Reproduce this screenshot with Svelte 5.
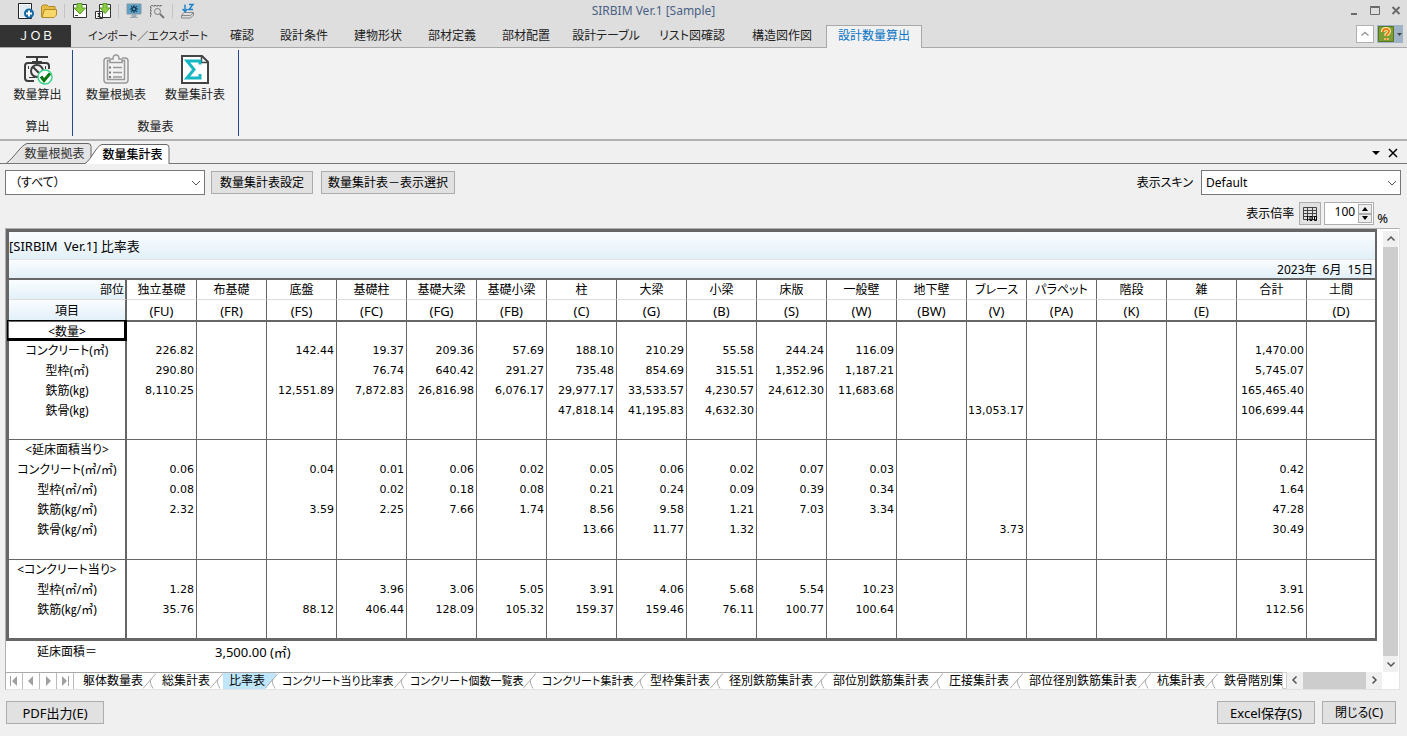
<script lang="ts">
	// Quantity summary window: ribbon, document tabs, filter bar and the ratio sheet.

	type Section = { title: string; rows: { label: string; values: string[] }[] };

	const ribbonTabs = [
		{ label: 'インポート／エクスポート', width: 132 },
		{ label: '確認', width: 56 },
		{ label: '設計条件', width: 68 },
		{ label: '建物形状', width: 80 },
		{ label: '部材定義', width: 68 },
		{ label: '部材配置', width: 80 },
		{ label: '設計テーブル', width: 80 },
		{ label: 'リスト図確認', width: 92 },
		{ label: '構造図作図', width: 88 },
		{ label: '設計数量算出', width: 96 }
	];
	let activeRibbon = $state('設計数量算出');

	const columns = [
		['独立基礎', '(FU)', 70],
		['布基礎', '(FR)', 70],
		['底盤', '(FS)', 70],
		['基礎柱', '(FC)', 70],
		['基礎大梁', '(FG)', 70],
		['基礎小梁', '(FB)', 70],
		['柱', '(C)', 70],
		['大梁', '(G)', 70],
		['小梁', '(B)', 70],
		['床版', '(S)', 70],
		['一般壁', '(W)', 70],
		['地下壁', '(BW)', 70],
		['ブレース', '(V)', 60],
		['パラペット', '(PA)', 70],
		['階段', '(K)', 70],
		['雑', '(E)', 70],
		['合計', '', 70],
		['土間', '(D)', 68]
	] as const;

	/** Spread a compact "a|b||c" line over the 18 part columns. */
	const line = (text: string) => text.split('|');

	const sections: Section[] = [
		{
			title: '<数量>',
			rows: [
				{ label: 'コンクリート(㎥)', values: line('226.82||142.44|19.37|209.36|57.69|188.10|210.29|55.58|244.24|116.09||||||1,470.00|') },
				{ label: '型枠(㎡)', values: line('290.80|||76.74|640.42|291.27|735.48|854.69|315.51|1,352.96|1,187.21||||||5,745.07|') },
				{ label: '鉄筋(㎏)', values: line('8,110.25||12,551.89|7,872.83|26,816.98|6,076.17|29,977.17|33,533.57|4,230.57|24,612.30|11,683.68||||||165,465.40|') },
				{ label: '鉄骨(㎏)', values: line('||||||47,818.14|41,195.83|4,632.30||||13,053.17||||106,699.44|') }
			]
		},
		{
			title: '<延床面積当り>',
			rows: [
				{ label: 'コンクリート(㎥/㎡)', values: line('0.06||0.04|0.01|0.06|0.02|0.05|0.06|0.02|0.07|0.03||||||0.42|') },
				{ label: '型枠(㎡/㎡)', values: line('0.08|||0.02|0.18|0.08|0.21|0.24|0.09|0.39|0.34||||||1.64|') },
				{ label: '鉄筋(㎏/㎡)', values: line('2.32||3.59|2.25|7.66|1.74|8.56|9.58|1.21|7.03|3.34||||||47.28|') },
				{ label: '鉄骨(㎏/㎡)', values: line('||||||13.66|11.77|1.32||||3.73||||30.49|') }
			]
		},
		{
			title: '<コンクリート当り>',
			rows: [
				{ label: '型枠(㎡/㎥)', values: line('1.28|||3.96|3.06|5.05|3.91|4.06|5.68|5.54|10.23||||||3.91|') },
				{ label: '鉄筋(㎏/㎥)', values: line('35.76||88.12|406.44|128.09|105.32|159.37|159.46|76.11|100.77|100.64||||||112.56|') }
			]
		}
	];

	const sheets = [
		{ label: '躯体数量表', width: 79 },
		{ label: '総集計表', width: 67 },
		{ label: '比率表', width: 53 },
		{ label: 'コンクリート当り比率表', width: 128 },
		{ label: 'コンクリート個数一覧表', width: 132 },
		{ label: 'コンクリート集計表', width: 108 },
		{ label: '型枠集計表', width: 79 },
		{ label: '径別鉄筋集計表', width: 104 },
		{ label: '部位別鉄筋集計表', width: 116 },
		{ label: '圧接集計表', width: 80 },
		{ label: '部位径別鉄筋集計表', width: 128 },
		{ label: '杭集計表', width: 67 },
		{ label: '鉄骨階別集計表', width: 104 }
	];
	let activeSheet = $state('比率表');
	let zoom = $state(100);
</script>

{#snippet chevron(d: string)}
	<svg class="chevron" viewBox="0 0 10 10" width="10" height="10" aria-hidden="true"><path {d} /></svg>
{/snippet}

<div class="window">
	<header class="titlebar">
		<div class="quick">
			<button aria-label="新規">
				<svg viewBox="0 0 16 16" width="16" height="16">
					<path d="M.5.5h13v15H.5z" fill="#fff" stroke="#222" />
					<path d="M2 2h10v12H2z" fill="#dfeaf3" />
					<circle cx="11" cy="10.500" r="5" fill="#146aa5" />
					<path d="M11 7.500v6M8 10.500h6" stroke="#fff" stroke-width="2" />
				</svg>
			</button>
			<button aria-label="開く">
				<svg viewBox="0 0 16 16" width="16" height="16">
					<path d="M.5 14V3.500L2 2h4l1.500 1.500H14V8" fill="#e8bd42" stroke="#b28a25" />
					<path d="M1 14.500 3.500 6.500h12V12L13 14.500z" fill="#f9d86b" stroke="#b28a25" />
				</svg>
			</button>
			<i></i>
			<button aria-label="保存">
				<svg viewBox="0 0 16 16" width="16" height="16">
					<path d="M1.500 1.500h13v13h-13z" fill="#fff" stroke="#333" />
					<path d="M5 .5h5V5h3.500L8 11 2 5h3z" fill="#8ccc3f" stroke="#5a9e2c" />
					<path d="M3 12.500h3" stroke="#444" />
				</svg>
			</button>
			<button aria-label="別名で保存">
				<svg viewBox="0 0 16 16" width="16" height="16">
					<path d="M4.500 1.500h11v13h-11zM.500 8.500h7v7h-7z" fill="#fff" stroke="#333" />
					<path d="M8 .5h4V5h3L10 10.500 5 5h3z" fill="#8ccc3f" stroke="#5a9e2c" />
					<path d="M2.500 10.500h3M4 10.500v3M2.500 13.500h3" stroke="#222" />
				</svg>
			</button>
			<i></i>
			<button aria-label="表示設定">
				<svg viewBox="0 0 16 16" width="16" height="16">
					<path d="M1 1h14v10H1z" fill="#5aa2c8" stroke="#8498a4" />
					<path d="M6 11.500h4v2H6zM4 14.500h8" fill="#a9b5bc" stroke="#9cabb5" />
					<circle cx="8" cy="6" r="2" fill="#4e9ac4" stroke="#1b3a50" stroke-width="1.500" />
					<path d="M8 2v1.500M8 8.500V10M4 6h1.500M10.500 6H12M5 3l1 1M10 8l1 1M11 3l-1 1M5 9l1-1" stroke="#1b3a50" />
				</svg>
			</button>
			<button aria-label="検索">
				<svg viewBox="0 0 16 16" width="16" height="16" fill="none" stroke="#777">
					<path d="M1.500 14V2.500H13M1 5h3M1 8h2M1 11h3M5 2v3M8 2v2M11 2v3" stroke-dasharray="2 1" />
					<circle cx="8.500" cy="8.500" r="3" />
					<path d="m11 11 4 4" stroke-width="2" />
				</svg>
			</button>
			<i></i>
			<button aria-label="並べ替え">
				<svg viewBox="0 0 16 16" width="16" height="16" fill="none">
					<path d="M1.500 12.500 4 9.500h9.500l-3 3zM1.500 12.500v2.500h9l3-3V9.500" fill="#ddd" stroke="#888" />
					<path d="M5 1.500v7M2.500 6 5 8.500 7.500 6M9 1.500h4l-4 5h4" stroke="#1680cb" stroke-width="1.400" />
				</svg>
			</button>
		</div>
		<h1>SIRBIM Ver.1 [Sample]</h1>
		<div class="system">
			<button aria-label="最小化"><svg viewBox="0 0 10 10" width="10" height="10"><path d="M2 8h6" stroke-width="2" /></svg></button>
			<button aria-label="最大化"><svg viewBox="0 0 10 10" width="10" height="10"><path d="M.500 1.500h9v7h-9zM0 .5h10" /></svg></button>
			<button aria-label="終了"><svg viewBox="0 0 10 10" width="10" height="10"><path d="m1.500 1 7 7M8.500 1l-7 7" stroke-width="2" /></svg></button>
		</div>
	</header>

	<nav class="ribbon-tabs">
		<button class="job">ＪＯＢ</button>
		{#each ribbonTabs as tab, i (tab.label)}
			<button
				class="ribbon-tab"
				class:active={activeRibbon === tab.label}
				class:kana={i === 0}
				style:width="{tab.width}px"
				onclick={() => (activeRibbon = tab.label)}>{tab.label}</button
			>
		{/each}
		<div class="ribbon-help">
			<button class="collapse" aria-label="リボンを折りたたむ">{@render chevron('M1.500 6.500 5 3.500l3.500 3')}</button>
			<button class="help" aria-label="ヘルプ">
				<svg viewBox="0 0 26 18" width="26" height="18">
					<path d="M0 0h26v18H0z" fill="#9fb2c6" />
					<path d="M1.500 1.500h15v15h-15z" fill="#7d9e32" stroke="#587520" />
					<path d="M6 7Q6 4 9 4t3 2.500Q12 8 9.500 9.500V11M9.500 13v2" fill="none" stroke="#fff2b0" stroke-width="4" />
					<path d="M6 7Q6 4 9 4t3 2.500Q12 8 9.500 9.500V11M9.500 13v2" fill="none" stroke="#f07b12" stroke-width="2" />
					<path d="M20 8h5l-2.500 3z" fill="#444" />
				</svg>
			</button>
		</div>
	</nav>

	<section class="ribbon">
		<div class="group single">
			<div class="tools">
				<button class="tool">
					<svg viewBox="0 0 32 32" width="32" height="32" fill="none" stroke="#3c3c3c">
						<path d="M5 3h22M16 3v5M11 8h10" stroke-width="2" />
						<path d="M13 27H7q-3 0-3-3V12q0-3 3-3h18q3 0 3 3v3" stroke-width="2" />
						<path d="M7.500 12v3M24.500 12v3M8 23.500h6" />
						<circle cx="16" cy="17" r="6" stroke-width="2" />
						<path d="m12 13 6 6" stroke-width="2" />
						<circle cx="24" cy="23" r="7" fill="#fff" stroke="#3cd28b" stroke-width="1.500" />
						<path d="m20 22.500 3 4 6-7" stroke="#087511" stroke-width="3" />
					</svg>
					数量算出
				</button>
			</div>
			<span>算出</span>
		</div>
		<div class="group">
			<div class="tools">
				<button class="tool">
					<svg viewBox="0 0 32 32" width="32" height="32" fill="none" stroke="#999" stroke-width="1.500">
						<path d="M10 4H7q-3 0-3 3v19q0 3 3 3h18q3 0 3-3V7q0-3-3-3h-3" />
						<path d="M10 6.500H7.500v19h17v-19H22" />
						<path d="M10 8.500V6q0-1 1-1h2q0-4 3-4t3 4h2q1 0 1 1v2.500z" fill="#f2f2f2" />
						<path d="M13 13.500h9M13 18.500h9M13 23h9" />
						<path d="M9 13.500h2M9 18.500h2M9 23h2" stroke="#777" stroke-width="2" />
					</svg>
					数量根拠表
				</button>
				<button class="tool">
					<svg viewBox="0 0 32 32" width="32" height="32" fill="none">
						<path d="M3 2h20l6 6v21H3z" fill="#fff" stroke="#444" stroke-width="2" />
						<path d="M22.500 2.500v6h6" stroke="#444" stroke-width="1.500" />
						<path d="M21 10.500V7H8l7 8.500L8 24h13v-4" stroke="#16b6c3" stroke-width="3" />
					</svg>
					数量集計表
				</button>
			</div>
			<span>数量表</span>
		</div>
	</section>

	<div class="doc-tabs">
		<button class="doc-tab">
			<svg viewBox="0 0 86 20" width="86" height="20"><path d="M.500 20C8 15 15 2 21 .500h61q3 0 3 3V20" /></svg>
			<span>数量根拠表</span>
		</button>
		<button class="doc-tab current">
			<svg viewBox="0 0 86 20" width="86" height="20"><path d="M.500 20C8 15 12 2 18 .500h64q3 0 3 3V20" /></svg>
			<span>数量集計表</span>
		</button>
		<div class="doc-actions">
			<button aria-label="タブ一覧"><svg viewBox="0 0 10 10" width="10" height="10"><path d="M1 3h8L5 7z" fill="#000" /></svg></button>
			<button aria-label="タブを閉じる"><svg viewBox="0 0 10 10" width="10" height="10"><path d="m1 1 8 8M9 1 1 9" stroke="#000" stroke-width="1.500" /></svg></button>
		</div>
	</div>

	<main>
		<div class="filters">
			<div class="combo">
				<select class="indent" aria-label="表示対象"><option>（すべて）</option></select>
				{@render chevron('m1 3 4 4 4-4')}
			</div>
			<button class="push settings">数量集計表設定</button>
			<button class="push">数量集計表－表示選択</button>
			<label class="skin" for="skin">表示スキン</label>
			<div class="combo">
				<select id="skin"><option>Default</option></select>
				{@render chevron('m1 3 4 4 4-4')}
			</div>
		</div>

		<div class="zoom">
			<label for="zoom">表示倍率</label>
			<button class="grid-button" aria-label="100%表示">
				<svg viewBox="0 0 16 16" width="16" height="16" fill="none" stroke="#444">
					<path d="M1.500 1.500h13v12h-13zM1 4.500h14M1 7.500h14M1 10.500h14M5.500 1v13M10.500 1v13" />
					<path d="M5.500 10v5M8 10.500h2v4H8zM12.500 10.500h2v4h-2z" stroke="#000" />
				</svg>
			</button>
			<div class="spinner">
				<input id="zoom" type="text" inputmode="numeric" bind:value={zoom} />
				<div>
					<button aria-label="拡大" onclick={() => (zoom += 1)}><svg viewBox="0 0 6 4" width="6" height="4"><path d="M0 4h6L3 0z" /></svg></button>
					<button aria-label="縮小" onclick={() => (zoom -= 1)}><svg viewBox="0 0 6 4" width="6" height="4"><path d="M0 0h6L3 4z" /></svg></button>
				</div>
			</div>
			<span class="percent">%</span>
		</div>

		<div class="sheet">
			<div class="view">
				<div class="page">
					<table>
						<colgroup>
							<col style:width="118px" />
							{#each columns as [name, , width] (name)}
								<col style:width="{width}px" />
							{/each}
						</colgroup>
						<thead>
							<tr class="caption"><th colspan="19">[SIRBIM&ensp;Ver.1] 比率表</th></tr>
							<tr class="date"><th colspan="19">2023年&ensp;6月&ensp;15日</th></tr>
							<tr class="names">
								<th class="corner part">部位</th>
								{#each columns as [name] (name)}
									<th>{name}</th>
								{/each}
							</tr>
							<tr class="codes">
								<th class="corner">項目</th>
								{#each columns as [name, code] (name)}
									<th class="latin">{code}</th>
								{/each}
							</tr>
						</thead>
						{#each sections as section, i (section.title)}
							<tbody>
								<tr>
									<th class:selected={i === 0}>{section.title}</th>
									{#each columns as [name] (name)}<td></td>{/each}
								</tr>
								{#each section.rows as row (row.label)}
									<tr>
										<th>{row.label}</th>
										{#each row.values as value, c (c)}
											<td>{value}</td>
										{/each}
									</tr>
								{/each}
								<tr class="blank">
									<th></th>
									{#each columns as [name] (name)}<td></td>{/each}
								</tr>
							</tbody>
						{/each}
					</table>
					<p class="area"><span>延床面積＝</span><span class="latin">3,500.00 (㎡)</span></p>
				</div>
				<div class="vbar">
					<button aria-label="上へ">{@render chevron('m1.500 6.500 3.500-3.500 3.500 3.500')}</button>
					<div class="thumb"></div>
					<button aria-label="下へ">{@render chevron('m1.500 3.500 3.500 3.500 3.500-3.500')}</button>
				</div>
			</div>

			<div class="sheet-bar">
				<div class="steps">
					<button aria-label="先頭"><svg viewBox="0 0 10 10" width="10" height="10"><path d="M1 0h1v10H1zM8 0v10L3 5z" /></svg></button>
					<button aria-label="前へ"><svg viewBox="0 0 10 10" width="10" height="10"><path d="M7 0v10L2 5z" /></svg></button>
					<button aria-label="次へ"><svg viewBox="0 0 10 10" width="10" height="10"><path d="M3 0v10l5-5z" /></svg></button>
					<button aria-label="末尾"><svg viewBox="0 0 10 10" width="10" height="10"><path d="M8 0h1v10H8zM2 0v10l5-5z" /></svg></button>
				</div>
				<div class="sheet-tabs">
					{#each sheets as sheet (sheet.label)}
						<button
							class:active={activeSheet === sheet.label}
							class:kana={sheet.label.startsWith('コン')}
							style:width="{sheet.width}px"
							onclick={() => (activeSheet = sheet.label)}
						>
							<span>{sheet.label}</span>
							<svg viewBox="0 0 13 16" width="13" height="16">
								<path class="cover" d="M0 16 13 0v16z" />
								<path d="M0 15.500 13 .500M8 6q-2 3 2 9.500" />
							</svg>
						</button>
					{/each}
				</div>
				<div class="grip"></div>
				<div class="hbar">
					<button aria-label="左へ">{@render chevron('M6.500 1.500 3 5l3.500 3.500')}</button>
					<div class="thumb"></div>
					<button aria-label="右へ">{@render chevron('M3.500 1.500 7 5 3.500 8.500')}</button>
				</div>
			</div>
		</div>

		<footer>
			<button class="push wide">PDF出力(E)</button>
			<span></span>
			<button class="push wide">Excel保存(S)</button>
			<button class="push">閉じる(C)</button>
		</footer>
	</main>
</div>

<style>
	:global(body) {
		background: #f0f0f0;
	}

	.window {
		font: 12px/16px 'Noto Sans', 'Noto Sans CJK JP', sans-serif;
		font-feature-settings: 'palt';
		color: #000;
		white-space: nowrap;
	}

	.window * {
		box-sizing: border-box;
	}

	button,
	input,
	select {
		margin: 0;
		padding: 0;
		border: 0;
		border-radius: 0;
		background: none;
		font: inherit;
		font-feature-settings: inherit;
		color: inherit;
		appearance: none;
	}

	svg {
		display: block;
		flex: none;
	}

	.chevron path {
		fill: none;
		stroke: #555;
		stroke-width: 1.5;
	}

	.latin {
		font-size: 13px;
	}

	/* title bar */
	.titlebar {
		display: grid;
		grid-template-columns: 1fr auto 1fr;
		align-items: center;
		height: 22px;
		padding: 0 6px 0 18px;
		background: #dedede;
	}

	.quick {
		display: flex;
		align-items: center;
		gap: 7px;
	}

	.quick i {
		width: 1px;
		height: 14px;
		background: #c4c4c4;
	}

	h1 {
		margin: 0 112px 0 0;
		font-size: 12px;
		font-weight: 400;
		line-height: 20px;
		color: #4a6184;
	}

	.system {
		display: flex;
		justify-content: flex-end;
		gap: 11px;
	}

	.system path {
		fill: none;
		stroke: #6b6b6b;
	}

	/* ribbon */
	.ribbon-tabs {
		display: flex;
		align-items: flex-end;
		height: 26px;
		border-bottom: 1px solid #a9a9a9;
		background: #dedede;
	}

	.job {
		width: 71px;
		height: 22px;
		margin-right: 11px;
		background: #333;
		font-feature-settings: normal;
		color: #fff;
	}

	.ribbon-tab {
		display: flex;
		align-items: center;
		justify-content: center;
		height: 23px;
		margin-bottom: -1px;
		padding-bottom: 2px;
		border: 1px solid transparent;
		border-bottom: 0;
		color: #222;
	}

	.ribbon-tab.active {
		border-color: #a9a9a9;
		background: #f2f2f2;
		color: #0a74c4;
	}

	.kana {
		font-size: 11px;
	}

	.ribbon-help {
		display: flex;
		align-items: center;
		gap: 3px;
		margin: 0 4px 4px auto;
	}

	.collapse {
		display: grid;
		place-items: center;
		width: 18px;
		height: 18px;
		border: 1px solid #b0b0b0;
		background: #fff;
	}

	.collapse :global(path) {
		stroke: #999;
	}

	.ribbon {
		display: flex;
		height: 91px;
		padding-top: 2px;
		background: #f2f2f2;
	}

	.group {
		display: flex;
		flex-direction: column;
		justify-content: space-between;
		align-items: center;
		width: 166px;
		height: 86px;
		padding: 4px 0 1px;
		border-right: 1px solid #26478d;
		color: #222;
	}

	.group.single {
		width: 73px;
		padding-left: 3px;
	}

	.tools {
		display: flex;
		gap: 19px;
	}

	.tool {
		display: flex;
		flex-direction: column;
		gap: 1px;
		align-items: center;
	}

	/* document tabs */
	.doc-tabs {
		display: flex;
		align-items: flex-end;
		height: 25px;
		padding-left: 6px;
		border-top: 2px solid #b0b0b0;
		border-bottom: 1px solid #777;
	}

	.doc-tab {
		display: grid;
		height: 20px;
	}

	.doc-tab > * {
		grid-area: 1 / 1;
	}

	.doc-tab span {
		padding: 3px 7px 0 18px;
		color: #333;
	}

	.doc-tab path {
		fill: #e4e4e4;
		stroke: #666;
	}

	.doc-tab.current {
		z-index: 1;
		margin: 0 0 -1px -8px;
	}

	.doc-tab.current path {
		fill: #fff;
	}

	.doc-tab.current span {
		font-weight: 500;
		color: #000;
	}

	.doc-actions {
		display: flex;
		gap: 7px;
		margin: 0 9px 5px auto;
	}

	/* filters */
	main {
		padding: 6px 6px 11px 5px;
	}

	.filters {
		display: flex;
		align-items: center;
		gap: 8px;
	}

	.combo {
		display: grid;
		align-items: center;
		width: 200px;
	}

	.combo > * {
		grid-area: 1 / 1;
	}

	.combo .chevron {
		justify-self: end;
		margin-right: 4px;
		pointer-events: none;
	}

	.combo .chevron path {
		stroke-width: 1;
	}

	select {
		width: 100%;
		height: 25px;
		padding: 0 20px 0 4px;
		border: 1px solid #777;
		background: #fff;
	}

	select.indent {
		padding-left: 9px;
	}

	.push {
		height: 23px;
		padding: 0 6px;
		border: 1px solid #adadad;
		background: #e1e1e1;
	}

	.settings {
		padding: 0 8px;
		margin-left: -2px;
	}

	.push.wide {
		width: 98px;
	}

	.skin {
		margin-left: auto;
	}

	.zoom {
		display: flex;
		align-items: center;
		gap: 3px;
		justify-content: flex-end;
		padding: 7px 13px 3px 0;
	}

	.grid-button {
		display: grid;
		place-items: center;
		width: 22px;
		height: 23px;
		margin-left: 2px;
		border: 1px solid #adadad;
		background: #e1e1e1;
	}

	.spinner {
		display: flex;
		width: 50px;
		height: 23px;
		padding: 1px;
		border: 1px solid #adadad;
		background: #fff;
	}

	.spinner input {
		flex: 1;
		min-width: 0;
		padding: 0 3px 3px 0;
		text-align: right;
	}

	.spinner div {
		display: grid;
		grid-template-rows: 1fr 1fr;
		width: 14px;
	}

	.spinner button {
		display: grid;
		place-items: center;
		border: 1px solid #adadad;
		background: #eee;
	}

	.percent {
		align-self: flex-end;
		font-size: 13px;
		line-height: 14px;
	}

	/* sheet */
	.sheet {
		margin-right: 1px;
		border: 1px solid #b0b0b0;
		border-right-color: #e3e3e3;
		border-bottom-color: #e3e3e3;
		background: #fff;
	}

	.view {
		display: flex;
	}

	.page {
		flex: 1;
		min-width: 0;
	}

	table {
		width: 100%;
		table-layout: fixed;
		border-collapse: separate;
		border-spacing: 0;
		border: 3px solid #666;
		border-right-width: 2px;
	}

	th,
	td {
		height: 20px;
		padding: 0;
		border-right: 1px solid #666;
		font-weight: 400;
		line-height: 18px;
	}

	td {
		padding-right: 2px;
		font-family: 'DejaVu Sans', sans-serif;
		font-size: 11px;
		text-align: right;
	}

	th:first-child {
		border-right-width: 2px;
	}

	th:last-child,
	td:last-child {
		border-right: 0;
	}

	.caption th {
		height: 28px;
		border-bottom: 1px solid #e0e4e8;
		background: linear-gradient(#fafdff, #e2f0f8);
		font-size: 13px;
		text-align: left;
	}

	.date th {
		height: 20px;
		padding: 2px 2px 0 0;
		border-bottom: 2px solid #666;
		background: linear-gradient(#fafdff, #e2f0f8);
		line-height: 16px;
		text-align: right;
	}

	.names th {
		padding-top: 1px;
		border-bottom: 1px solid #dcdcdc;
	}

	.codes th {
		height: 22px;
		padding-top: 1px;
		border-bottom: 2px solid #666;
	}

	th.latin {
		font-size: 13px;
	}

	.corner {
		background: linear-gradient(#fafdff, #e2f0f8);
	}

	.names .corner.part {
		padding-right: 1px;
		text-align: right;
	}

	.blank th,
	.blank td {
		height: 20px;
		border-bottom: 1px solid #666;
	}

	tbody:first-of-type tr:first-child th,
	tbody:first-of-type .blank th,
	tbody:first-of-type .blank td {
		height: 19px;
	}

	tbody:first-of-type td {
		height: 19px;
	}

	tbody:last-child .blank th,
	tbody:last-child .blank td {
		height: 18px;
		border-bottom: 0;
	}

	.selected {
		position: relative;
	}

	.selected::after {
		content: '';
		position: absolute;
		inset: -2px -2px 0;
		border: solid #000;
		border-width: 1px 3px 3px 1px;
	}

	.area {
		display: flex;
		height: 31px;
		margin: 0;
		padding: 3px 0 0 31px;
	}

	.area span:first-child {
		width: 178px;
	}

	.vbar {
		display: flex;
		flex-direction: column;
		width: 15px;
		margin: 2px 1px 0 6px;
		background: #f0f0f0;
	}

	.vbar button,
	.hbar button {
		display: grid;
		place-items: center;
		width: 16px;
		height: 16px;
	}

	.thumb {
		flex: 1;
		background: #cdcdcd;
	}

	.sheet-bar {
		display: flex;
		height: 17px;
		padding-right: 17px;
	}

	.steps {
		display: flex;
		border-top: 1px solid #aaa;
	}

	.steps button {
		display: grid;
		place-items: center;
		width: 17px;
		border-right: 1px solid #bbb;
	}

	.steps path {
		fill: #a0a0a0;
	}

	.sheet-tabs {
		display: flex;
		flex: 1;
		min-width: 0;
		overflow: hidden;
		padding-left: 3px;
		border-top: 1px solid #aaa;
	}

	.sheet-tabs button {
		display: flex;
		flex: none;
		justify-content: space-between;
		padding-left: 6px;
	}

	.sheet-tabs path {
		fill: none;
		stroke: #aaa;
	}

	.sheet-tabs .cover {
		fill: #fff;
		stroke: none;
	}

	.sheet-tabs .active {
		background: #bfe6fb;
	}

	.grip {
		width: 5px;
		border: 1px solid #d0d0d0;
		background: #fff;
	}

	.hbar {
		display: flex;
		width: 95px;
		background: #f0f0f0;
	}

	footer {
		display: flex;
		gap: 7px;
		padding: 11px 5px 0 1px;
	}

	footer span {
		flex: 1;
	}

	footer .wide {
		font-size: 13px;
	}

	footer .push:last-child {
		padding: 0 12px;
	}
</style>
